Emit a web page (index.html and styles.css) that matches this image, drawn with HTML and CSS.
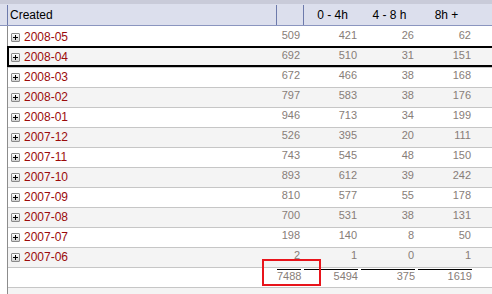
FILE: index.html
```html
<!DOCTYPE html>
<html>
<head>
<meta charset="utf-8">
<link rel="stylesheet" href="styles.css">
</head>
<body>
<div class="page">
  <div class="topstrip"></div>
  <div class="header">
    <div class="hcell gutter"></div>
    <div class="hcell created">Created</div>
    <div class="hcell tot"></div>
    <div class="hcell num">0 - 4h</div>
    <div class="hcell num">4 - 8 h</div>
    <div class="hcell num">8h +</div>
    <div class="hcell"></div>
  </div>
  <div class="body">
    <div class="row odd"><div class="date"><span class="exp"></span>2008-05</div><div class="n">509</div><div class="n">421</div><div class="n">26</div><div class="n">62</div><div></div></div>
    <div class="row even selected"><div class="date"><span class="exp"></span>2008-04</div><div class="n">692</div><div class="n">510</div><div class="n">31</div><div class="n">151</div><div></div></div>
    <div class="row odd"><div class="date"><span class="exp"></span>2008-03</div><div class="n">672</div><div class="n">466</div><div class="n">38</div><div class="n">168</div><div></div></div>
    <div class="row even"><div class="date"><span class="exp"></span>2008-02</div><div class="n">797</div><div class="n">583</div><div class="n">38</div><div class="n">176</div><div></div></div>
    <div class="row odd"><div class="date"><span class="exp"></span>2008-01</div><div class="n">946</div><div class="n">713</div><div class="n">34</div><div class="n">199</div><div></div></div>
    <div class="row even"><div class="date"><span class="exp"></span>2007-12</div><div class="n">526</div><div class="n">395</div><div class="n">20</div><div class="n">111</div><div></div></div>
    <div class="row odd"><div class="date"><span class="exp"></span>2007-11</div><div class="n">743</div><div class="n">545</div><div class="n">48</div><div class="n">150</div><div></div></div>
    <div class="row even"><div class="date"><span class="exp"></span>2007-10</div><div class="n">893</div><div class="n">612</div><div class="n">39</div><div class="n">242</div><div></div></div>
    <div class="row odd"><div class="date"><span class="exp"></span>2007-09</div><div class="n">810</div><div class="n">577</div><div class="n">55</div><div class="n">178</div><div></div></div>
    <div class="row even"><div class="date"><span class="exp"></span>2007-08</div><div class="n">700</div><div class="n">531</div><div class="n">38</div><div class="n">131</div><div></div></div>
    <div class="row odd"><div class="date"><span class="exp"></span>2007-07</div><div class="n">198</div><div class="n">140</div><div class="n">8</div><div class="n">50</div><div></div></div>
    <div class="row even"><div class="date"><span class="exp"></span>2007-06</div><div class="n">2</div><div class="n">1</div><div class="n">0</div><div class="n">1</div><div></div></div>
    <div class="row odd total"><div class="date"></div><div class="t">7488</div><div class="t">5494</div><div class="t">375</div><div class="t">1619</div><div></div></div>
    <div class="row even filler"></div>
  </div>
  <div class="highlight"></div>
</div>
</body>
</html>
```
FILE: styles.css
```css
* { box-sizing: border-box; }
html, body { margin: 0; padding: 0; }
body {
  background: #ffffff;
  font-family: "Liberation Sans", Arial, sans-serif;
  width: 492px;
  height: 294px;
  overflow: hidden;
}
.page {
  position: relative;
  display: flex;
  flex-direction: column;
  height: 294px;
}
.topstrip {
  height: 4px;
  background: #c9cbd9;
}
.header {
  display: grid;
  grid-template-columns: 8px 269px 27px 57px 57px 57px 1fr;
  height: 22px;
  background: #dcdfed;
  border-bottom: 1px solid #8a95bf;
}
.hcell {
  font-size: 12px;
  line-height: 17px;
  padding-top: 3px;
  color: #000;
  white-space: nowrap;
}
.gutter, .created, .tot {
  border-right: 1px solid #6d7aab;
  margin-top: 1px;
}
.created { padding-left: 2px; padding-top: 2px; }
.num { text-align: center; }
.body {
  flex: 1;
  margin-left: 7px;
  border-left: 1px solid #8c8c8c;
  padding-top: 2px;
  display: flex;
  flex-direction: column;
}
.row {
  position: relative;
  display: grid;
  grid-template-columns: 268px 27px 57px 57px 57px 1fr;
  height: 20px;
  flex: none;
  border-bottom: 1px solid #c6c6c6;
}
.row.odd { background: #ffffff; }
.row.even { background: #f4f4f4; }
.row.filler { border-bottom: none; flex: 1; height: auto; }
.row.selected::after {
  content: "";
  position: absolute;
  left: -1px;
  right: -3px;
  top: -2px;
  bottom: 0;
  border: 2px solid #000;
  pointer-events: none;
}
.date {
  display: flex;
  align-items: center;
  font-size: 12px;
  line-height: 19px;
  color: #9b0b0b;
  padding-left: 3px;
  white-space: nowrap;
}
.exp {
  width: 9px;
  height: 9px;
  margin-right: 4px;
  border: 1px solid #8a8a8a;
  border-radius: 1px;
  background:
    linear-gradient(#000, #000) center / 5px 1px no-repeat,
    linear-gradient(#000, #000) center / 1px 5px no-repeat,
    linear-gradient(#fbfbfb, #d2d2d2);
  flex: none;
}
.n {
  font-size: 11px;
  line-height: 15px;
  text-align: right;
  padding-right: 3px;
  color: #877d78;
}
.t {
  font-size: 11px;
  line-height: 13px;
  text-align: right;
  margin: 1px 2px 0 1px;
  border-top: 1px solid #000;
  align-self: start;
  color: #877d78;
}
.highlight {
  position: absolute;
  left: 262px;
  top: 259px;
  width: 59px;
  height: 27px;
  border: 2px solid #e8141b;
}
```
